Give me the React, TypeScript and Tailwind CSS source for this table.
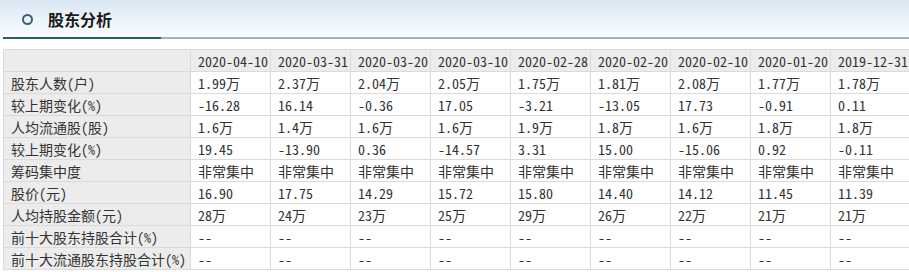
import React from "react";

const dates = ["2020-04-10","2020-03-31","2020-03-20","2020-03-10","2020-02-28","2020-02-20","2020-02-10","2020-01-20","2019-12-31"];
const rows: [string, string[]][] = [
  ["股东人数(户)", ["1.99万","2.37万","2.04万","2.05万","1.75万","1.81万","2.08万","1.77万","1.78万"]],
  ["较上期变化(%)", ["-16.28","16.14","-0.36","17.05","-3.21","-13.05","17.73","-0.91","0.11"]],
  ["人均流通股(股)", ["1.6万","1.4万","1.6万","1.6万","1.9万","1.8万","1.6万","1.8万","1.8万"]],
  ["较上期变化(%)", ["19.45","-13.90","0.36","-14.57","3.31","15.00","-15.06","0.92","-0.11"]],
  ["筹码集中度", Array(9).fill("非常集中")],
  ["股价(元)", ["16.90","17.75","14.29","15.72","15.80","14.40","14.12","11.45","11.39"]],
  ["人均持股金额(元)", ["28万","24万","23万","25万","29万","26万","22万","21万","21万"]],
  ["前十大股东持股合计(%)", Array(9).fill("--")],
  ["前十大流通股东持股合计(%)", Array(9).fill("--")],
];

export default function App() {
  return (
    <div className="w-[909px] h-[272px] bg-white overflow-hidden text-[#333] [font-family:'Noto_Sans_CJK_SC',sans-serif]">
      <div className="h-[37px] bg-gradient-to-b from-[#dae6f4] to-[#fbfdff] flex items-center pl-[22px]">
        <span className="w-[11px] h-[11px] rounded-full border-[2px] border-[#3b5e72] mr-[15px] mt-[1px]" />
        <span className="text-[16px] font-bold text-[#1a1a1a] leading-none mt-[1px]">股东分析</span>
      </div>
      <div className="flex h-[2px] ml-[3px]">
        <div className="w-[158px] bg-[#2c5d6b]" />
        <div className="flex-1 bg-[#9fb4c0]" />
      </div>
      <div className="h-[10px]" />
      <table className="ml-[3px] w-[905px] border-collapse table-fixed text-[14px] [font-feature-settings:'hwid'] leading-none">
        <colgroup>
          <col className="w-[187px]" />
          {dates.map((d) => <col key={d} className="w-[80px]" />)}
        </colgroup>
        <thead>
          <tr className="h-[22px] bg-[#ececec]">
            <th className="border border-[#dadada] p-0" />
            {dates.map((d) => (
              <th key={d} className="border border-[#dadada] font-normal text-left pl-[7px] whitespace-nowrap">{d}</th>
            ))}
          </tr>
        </thead>
        <tbody>
          {rows.map(([label, vals], i) => (
            <tr key={i} className="h-[22px]">
              <td className="bg-[#ececec] border border-[#dadada] pl-[7px] whitespace-nowrap">{label}</td>
              {vals.map((v, j) => (
                <td key={j} className="border border-[#dadada] pl-[7px] whitespace-nowrap">{v}</td>
              ))}
            </tr>
          ))}
        </tbody>
      </table>
    </div>
  );
}
